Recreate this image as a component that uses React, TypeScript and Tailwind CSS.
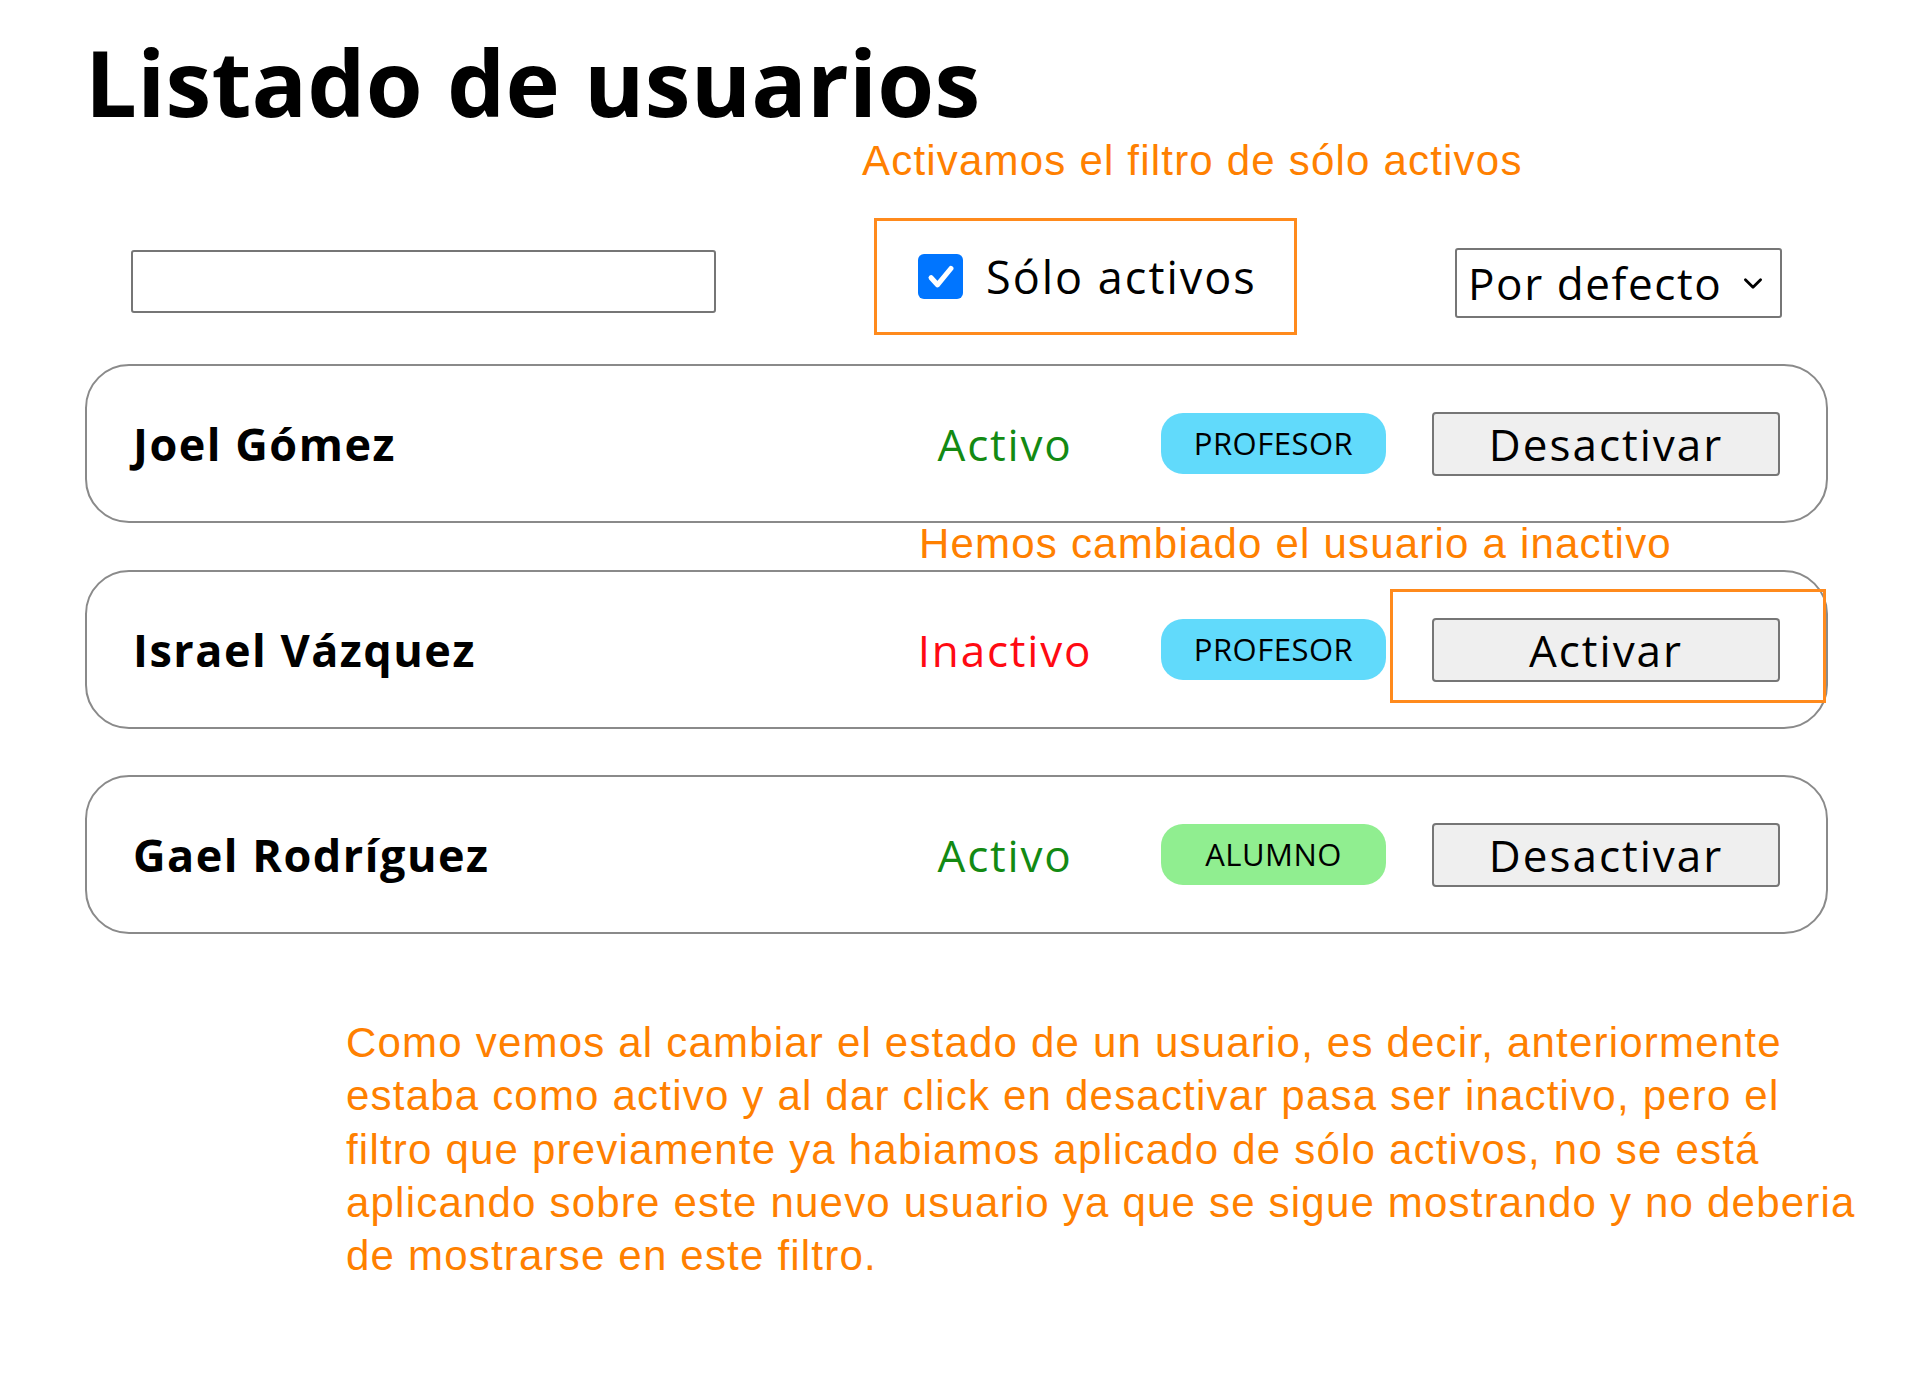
import React, { useState } from 'react';

interface User {
    name: string;
    active: boolean;
    role: 'PROFESOR' | 'ALUMNO';
}

const initialUsers: User[] = [
    { name: 'Joel Gómez', active: true, role: 'PROFESOR' },
    { name: 'Israel Vázquez', active: false, role: 'PROFESOR' },
    { name: 'Gael Rodríguez', active: true, role: 'ALUMNO' },
];

const note = "font-['Liberation_Sans',Arial,sans-serif] text-[42px] tracking-[1.2px] text-[#ff8000]";
const sans = "font-['Open_Sans',sans-serif]";

const UserCard: React.FC<{ user: User; highlight?: boolean; onToggle: () => void }> = ({ user, highlight, onToggle }) => (
    <div className={`flex h-[159px] items-center rounded-[44px] border-2 border-[#8a8a8a] px-[46px] leading-none ${sans}`}>
        <span className="flex-1 text-[45px] font-bold tracking-[1.5px] text-black">{user.name}</span>
        <span className={`w-[210px] text-center text-[44px] tracking-[1.8px] ${user.active ? 'text-[#138a13]' : 'text-[#ff0a12]'}`}>
            {user.active ? 'Activo' : 'Inactivo'}
        </span>
        <span
            className={`ml-[51px] flex h-[61px] w-[225px] items-center justify-center rounded-[22px] text-[31px] tracking-[0.5px] text-black ${
                user.role === 'PROFESOR' ? 'bg-[#61dafb]' : 'bg-[#90ee90]'
            }`}
        >
            {user.role}
        </span>
        <div className="relative ml-[46px]">
            <button
                onClick={onToggle}
                className="h-[64px] w-[348px] rounded-[4px] border-2 border-[#767676] bg-[#efefef] text-[44px] leading-none tracking-[2px] text-black"
            >
                {user.active ? 'Desactivar' : 'Activar'}
            </button>
            {highlight && (
                <div className="pointer-events-none absolute -top-[29px] -bottom-[21px] -left-[42px] -right-[46px] border-[3px] border-[#ff8a1c]" />
            )}
        </div>
    </div>
);

export default function App() {
    const [users, setUsers] = useState(initialUsers);
    const [onlyActive, setOnlyActive] = useState(true);
    const [search, setSearch] = useState('');

    const toggle = (i: number) =>
        setUsers(prev => prev.map((u, idx) => (idx === i ? { ...u, active: !u.active } : u)));

    return (
        <div className="min-h-screen bg-white">
            <div className="ml-[85px] w-[1743px] pt-[36px]">
                <h1 className={`${sans} text-[92px] font-bold leading-[92px] tracking-[0.2px] text-black`}>Listado de usuarios</h1>
                <p className={`${note} mt-[9px] h-[47px] pl-[777px] leading-[47px]`}>Activamos el filtro de sólo activos</p>

                {/* filtros */}
                <div className={`mt-[34px] flex items-center justify-between px-[46px] ${sans}`}>
                    <input
                        value={search}
                        onChange={e => setSearch(e.target.value)}
                        className="mt-[10px] h-[63px] w-[585px] rounded-[3px] border-2 border-[#767676] px-3 text-[30px] outline-none"
                    />
                    <label className="flex h-[117px] w-[423px] cursor-pointer items-center gap-[23px] border-[3px] border-[#ff8a1c] pl-[41px]">
                        <span
                            onClick={() => setOnlyActive(!onlyActive)}
                            className={`flex h-[45px] w-[45px] items-center justify-center rounded-[6px] ${onlyActive ? 'bg-[#0075ff]' : 'border-2 border-[#767676] bg-white'}`}
                        >
                            {onlyActive && (
                                <svg viewBox="0 0 24 24" className="h-[34px] w-[34px]" fill="none" stroke="white" strokeWidth={3.6} strokeLinecap="round" strokeLinejoin="round">
                                    <path d="M5 12.5l4.5 5L19 6" />
                                </svg>
                            )}
                        </span>
                        <span className="text-[45px] leading-none tracking-[2px] text-black">Sólo activos</span>
                    </label>
                    <div className="mt-[12px] flex h-[70px] w-[327px] items-center rounded-[3px] border-2 border-[#767676] pl-[11px] pr-[14px]">
                        <select className="flex-1 appearance-none bg-transparent text-[44px] leading-none tracking-[1.6px] text-black outline-none">
                            <option>Por defecto</option>
                            <option>Nombre</option>
                        </select>
                        <svg viewBox="0 0 24 24" className="h-[26px] w-[26px]" fill="none" stroke="black" strokeWidth={2.6} strokeLinecap="round" strokeLinejoin="round">
                            <path d="m5 9 7 7 7-7" />
                        </svg>
                    </div>
                </div>

                {/* listado */}
                <div className="mt-[29px] flex flex-col">
                    <UserCard user={users[0]} onToggle={() => toggle(0)} />
                    <p className={`${note} h-[47px] pl-[834px] leading-[41px]`}>Hemos cambiado el usuario a inactivo</p>
                    <UserCard user={users[1]} highlight onToggle={() => toggle(1)} />
                    <div className="mt-[46px]">
                        <UserCard user={users[2]} onToggle={() => toggle(2)} />
                    </div>
                </div>

                <p className={`${note} ml-[261px] mt-[82px] whitespace-nowrap leading-[53.3px]`}>
                    Como vemos al cambiar el estado de un usuario, es decir, anteriormente
                    <br />
                    estaba como activo y al dar click en desactivar pasa ser inactivo, pero el
                    <br />
                    filtro que previamente ya habiamos aplicado de sólo activos, no se está
                    <br />
                    aplicando sobre este nuevo usuario ya que se sigue mostrando y no deberia
                    <br />
                    de mostrarse en este filtro.
                </p>
            </div>
        </div>
    );
}
